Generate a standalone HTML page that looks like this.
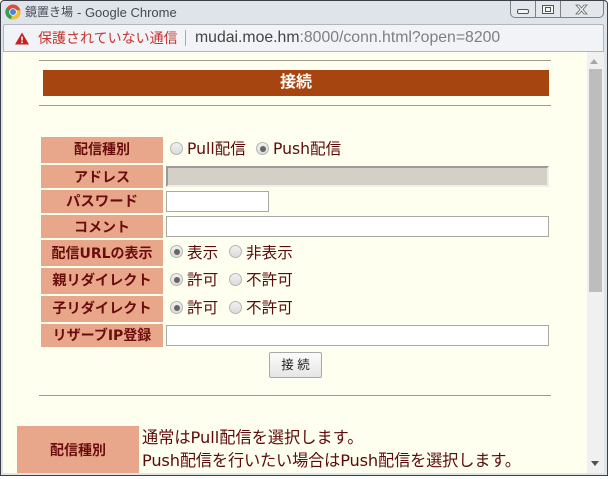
<!DOCTYPE html>
<html lang="ja"><head><meta charset="utf-8"><title>鏡置き場</title>
<style>
html,body{margin:0;padding:0;width:616px;height:479px;overflow:hidden;background:#fff}
*{box-sizing:border-box}
div,span{position:absolute;white-space:nowrap}
body{font-family:"Liberation Sans","Noto Sans CJK JP",sans-serif;color:#5c0a0a}
#win{left:0;top:0;width:608px;height:476px;background:#dfe3ea;border:1px solid #3c4048;border-radius:4px 4px 0 0}
.hr{left:39px;width:512px;height:1px;background:#9c9c92}
.lb{left:41px;width:122px;background:#e8a78b;text-align:center;font-weight:bold;font-size:14px;color:#6a0c0c;font-family:"DejaVu Sans","Noto Sans CJK JP",sans-serif}
.in{left:166px;height:21px;background:#fff;border:1px solid #a9a9a4}
.tx{font-size:15.6px;line-height:20px;font-family:"DejaVu Sans","Noto Sans CJK JP",sans-serif}
.r{width:13px;height:13px;border-radius:50%;border:1px solid #b4b4b4;background:linear-gradient(#f0f0f0,#dcdcdc)}
.r.on:after{content:"";position:absolute;left:2.500px;top:2.500px;width:6px;height:6px;border-radius:50%;background:#666}
</style></head><body>
<div id="win"></div>
<svg style="position:absolute;left:5px;top:4px" width="16" height="16" viewBox="0 0 16 16"><circle cx="8" cy="8" r="7.500" fill="#dd4b39"/><path d="M8 8 L1.500 4 A7.500 7.500 0 0 0 6 15.300Z" fill="#3a9e52"/><path d="M8 8 L6 15.300 A7.500 7.500 0 0 0 15.300 6.500 L8 5Z" fill="#f1c232"/><circle cx="8" cy="8" r="3.800" fill="#fff"/><circle cx="8" cy="8" r="3" fill="#4a80e8"/></svg>
<div style="left:25px;top:4px;font-size:12px;line-height:17px;color:#444a52">鏡置き場</div>
<div style="left:77px;top:4px;font-size:13px;line-height:17px;color:#444a52">- Google Chrome</div>
<div style="left:510px;top:1px;width:94px;height:17px;border:1px solid #7d828a;border-top:0;border-radius:0 0 5px 5px;background:#e3e6eb"></div>
<div style="left:535px;top:1px;width:1px;height:16px;background:#7d828a"></div>
<div style="left:560px;top:1px;width:1px;height:16px;background:#7d828a"></div>
<div style="left:517px;top:9px;width:12px;height:5px;border:1px solid #555;border-radius:2px;background:#f5f5f5"></div>
<div style="left:542px;top:5px;width:12px;height:9px;border:1px solid #555;background:#f5f5f5"></div>
<div style="left:545px;top:7px;width:6px;height:5px;border:1px solid #555"></div>
<svg style="position:absolute;left:575px;top:4px" width="13" height="11" viewBox="0 0 13 11"><path d="M1 1h3l2.500 3 2.500-3h3l-4 4.500 4 4.500h-3l-2.500-3-2.500 3h-3l4-4.500z" fill="#f4f4f4" stroke="#666" stroke-width=".8"/></svg>
<div style="left:3px;top:24px;width:601px;height:28px;background:#f1f3f6;border:1px solid #b2b6bc;border-radius:2px 2px 0 0"></div>
<svg style="position:absolute;left:15px;top:32px" width="14" height="13" viewBox="0 0 14 13"><path d="M7 0.500L14 12.500H0Z" fill="#c5221f"/><rect x="6.200" y="4.500" width="1.600" height="4" fill="#fff"/><rect x="6.200" y="9.500" width="1.600" height="1.600" fill="#fff"/></svg>
<div style="left:38px;top:28px;font-size:14px;line-height:20px;color:#c5352f">保護されていない通信</div>
<div style="left:185px;top:30px;width:1px;height:16px;background:#a8acb2"></div>
<div style="left:195px;top:28px;font-size:15.800px;line-height:20px;color:#7d7f83"><span style="position:static;color:#444">mudai.moe.hm</span>:8000/conn.html?open=8200</div>

<div style="left:3px;top:52px;width:584px;height:421px;background:#fffff0"></div>
<div style="left:587px;top:52px;width:17px;height:421px;background:#f0f0f0"></div>
<div style="left:589px;top:69px;width:13px;height:223px;background:#bdbdbd"></div>
<div style="left:590px;top:59px;width:0;height:0;border:4px solid transparent;border-bottom:5px solid #a6a6a6;border-top:0"></div>
<div style="left:591px;top:461px;width:0;height:0;border:4px solid transparent;border-top:5px solid #505050;border-bottom:0"></div>

<div class="hr" style="top:60px"></div>
<div style="left:43px;top:70px;width:506px;height:26px;background:#a64510;color:#fff;font-weight:bold;font-size:16px;line-height:25px;text-align:center">接続</div>
<div class="hr" style="top:105px"></div>

<div class="lb" style="top:137px;height:26px;line-height:26px">配信種別</div>
<div class="lb" style="top:165px;height:23px;line-height:26px">アドレス</div>
<div class="lb" style="top:190px;height:23px;line-height:24px;font-size:14.400px">パスワード</div>
<div class="lb" style="top:215px;height:23px;line-height:26px">コメント</div>
<div class="lb" style="top:240px;height:26px;line-height:28px">配信URLの表示</div>
<div class="lb" style="top:268px;height:26px;line-height:27px;font-size:14.200px">親リダイレクト</div>
<div class="lb" style="top:296px;height:26px;line-height:27px;font-size:14.200px">子リダイレクト</div>
<div class="lb" style="top:324px;height:23px;line-height:25px">リザーブIP登録</div>

<div class="r" style="left:170px;top:142px"></div><div class="tx" style="left:187px;top:139px">Pull配信</div>
<div class="r on" style="left:256px;top:142px"></div><div class="tx" style="left:273px;top:139px">Push配信</div>
<div style="left:166px;top:166px;width:383px;height:21px;background:#d4d0c8;border:2px solid #efeee8;border-top-color:#9a9a96;border-left-color:#9a9a96"></div>
<div class="in" style="top:191px;width:103px"></div>
<div class="in" style="top:216px;width:383px"></div>
<div class="r on" style="left:170px;top:245px"></div><div class="tx" style="left:187px;top:243px">表示</div>
<div class="r" style="left:229px;top:245px"></div><div class="tx" style="left:246px;top:243px">非表示</div>
<div class="r on" style="left:170px;top:273px"></div><div class="tx" style="left:187px;top:270px">許可</div>
<div class="r" style="left:229px;top:273px"></div><div class="tx" style="left:246px;top:270px">不許可</div>
<div class="r on" style="left:170px;top:301px"></div><div class="tx" style="left:187px;top:298px">許可</div>
<div class="r" style="left:229px;top:301px"></div><div class="tx" style="left:246px;top:298px">不許可</div>
<div class="in" style="top:325px;width:383px"></div>
<div style="left:269px;top:352px;width:53px;height:26px;background:linear-gradient(#fbfbfb,#e6e6e6);border:1px solid #a8a8a8;border-radius:2px;color:#222;font-size:12.500px;line-height:24px;text-align:center">接 続</div>
<div class="hr" style="top:395px"></div>

<div class="lb" style="left:17px;top:426px;height:47px;line-height:50px">配信種別</div>
<div class="tx" style="left:142px;top:428px;font-size:16.200px">通常はPull配信を選択します。</div>
<div class="tx" style="left:142px;top:451px;font-size:16.200px;letter-spacing:-.15px">Push配信を行いたい場合はPush配信を選択します。</div>
</body></html>
